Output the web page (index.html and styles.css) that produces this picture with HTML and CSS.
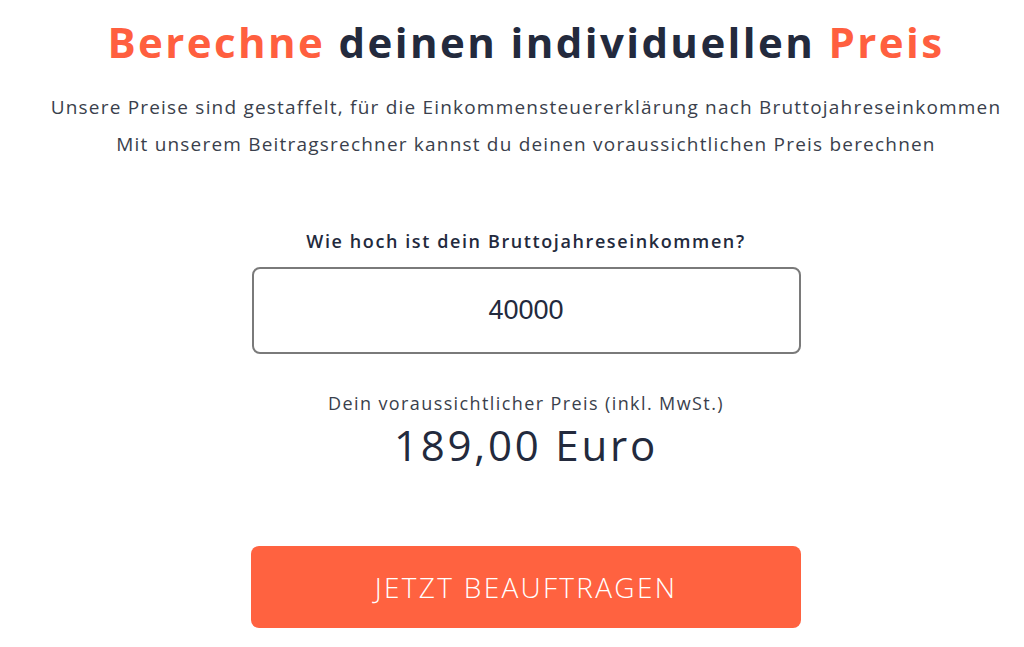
FILE: index.html
```html
<!DOCTYPE html>
<html lang="de">

<head>
    <meta charset="UTF-8">
    <meta name="viewport" content="width=device-width, initial-scale=1.0">
    <title>Beitragsrechner</title>
    <link rel="stylesheet" href="styles.css">
</head>

<body>
    <section class="pricing">
        <h1 class="headline"><span class="accent">Berechne</span> deinen individuellen <span class="accent">Preis</span></h1>
        <p class="intro">
            Unsere Preise sind gestaffelt, für die Einkommensteuererklärung nach Bruttojahreseinkommen<br>
            Mit unserem Beitragsrechner kannst du deinen voraussichtlichen Preis berechnen
        </p>

        <div class="calculator">
            <label class="calc-label" for="income">Wie hoch ist dein Bruttojahreseinkommen?</label>
            <input class="calc-input" id="income" type="text" value="40000">

            <div class="result-label">Dein voraussichtlicher Preis (inkl. MwSt.)</div>
            <div class="result-value">189,00 Euro</div>

            <button class="order-button">JETZT BEAUFTRAGEN</button>
        </div>
    </section>
</body>

</html>
```

FILE: styles.css
```css
body {
    font-family: 'Open Sans', Lato, sans-serif;
    margin: 0;
    background-color: white;
    color: #232a3d;
}

.pricing {
    padding-left: 28px;
    text-align: center;
}

.headline {
    font-size: 42px;
    font-weight: 700;
    letter-spacing: 2.4px;
    margin: 0;
    padding-top: 14px;
    line-height: 56px;
    color: #232a3d;
}

.accent {
    color: #ff5f3f;
}

.intro {
    font-size: 19px;
    letter-spacing: 1.2px;
    line-height: 37px;
    margin: 19px 0 0;
    color: #3a3f4c;
}

.calculator {
    width: 550px;
    margin: 0 auto;
    padding-top: 66px;
    display: flex;
    flex-direction: column;
    align-items: center;
}

.calc-label {
    font-size: 18px;
    font-weight: 600;
    letter-spacing: 1.6px;
    line-height: 24px;
    margin-bottom: 14px;
}

.calc-input {
    box-sizing: border-box;
    width: 549px;
    height: 87px;
    border: 2px solid #7a7a7a;
    border-radius: 8px;
    font-family: 'Liberation Sans', Arial, sans-serif;
    font-size: 27px;
    text-align: center;
    color: #232a3d;
    outline: none;
}

.result-label {
    font-size: 18px;
    letter-spacing: 1.4px;
    line-height: 26px;
    margin-top: 36px;
    color: #3a3f4c;
}

.result-value {
    font-size: 42px;
    font-weight: 400;
    letter-spacing: 2.8px;
    line-height: 52px;
    margin-top: 3px;
}

.order-button {
    width: 550px;
    height: 82px;
    margin-top: 75px;
    background-color: #ff6240;
    color: white;
    border: none;
    border-radius: 8px;
    font-family: 'Open Sans', Lato, sans-serif;
    font-size: 28px;
    font-weight: 300;
    letter-spacing: 2.3px;
    cursor: pointer;
}
```
